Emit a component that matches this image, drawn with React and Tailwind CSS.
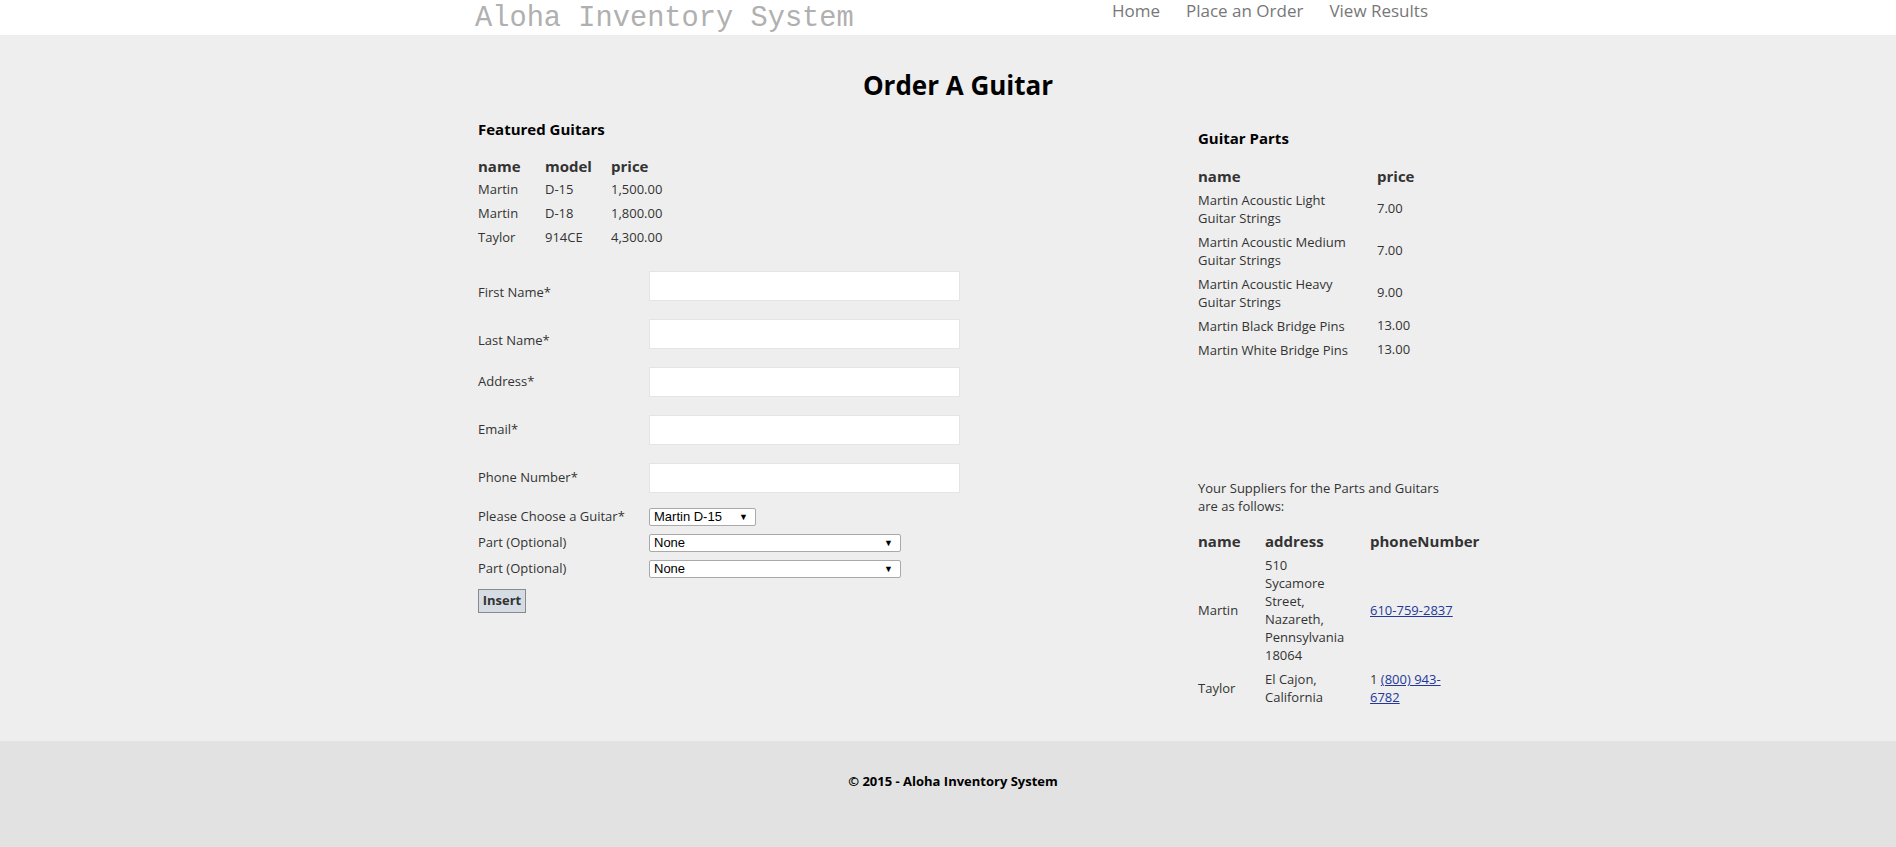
import { useState } from 'react'

const GUITARS = [
  { name: 'Martin', model: 'D-15', price: '1,500.00' },
  { name: 'Martin', model: 'D-18', price: '1,800.00' },
  { name: 'Taylor', model: '914CE', price: '4,300.00' }
]

const PARTS = [
  { name: ['Martin Acoustic Light', 'Guitar Strings'], price: '7.00' },
  { name: ['Martin Acoustic Medium', 'Guitar Strings'], price: '7.00' },
  { name: ['Martin Acoustic Heavy', 'Guitar Strings'], price: '9.00' },
  { name: ['Martin Black Bridge Pins'], price: '13.00' },
  { name: ['Martin White Bridge Pins'], price: '13.00' }
]

const FIELDS = [
  { label: 'First Name*', pad: 'pt-[14px]' },
  { label: 'Last Name*', pad: 'pt-[14px]' },
  { label: 'Address*', pad: 'pt-0' },
  { label: 'Email*', pad: 'pt-0' },
  { label: 'Phone Number*', pad: 'pt-0' }
]

function FakeSelect({ value, width }) {
  return (
    <div className={`flex h-[18px] items-center justify-between rounded-[2px] border border-[#a9a9a9] bg-white pl-[4px] pr-[7px] font-['Liberation_Sans',sans-serif] text-[13px] text-black ${width}`}>
      <span>{value}</span>
      <span className="text-[9px] leading-none">▼</span>
    </div>
  )
}

export default function App() {
  const [values, setValues] = useState({})

  return (
    <div className="h-[847px] overflow-hidden bg-[#eeeeee] font-['Open_Sans',sans-serif] text-[13px] text-[#333]">
      <header className="h-[35px] bg-white">
        <div className="ml-[475px] flex w-[953px] items-start justify-between">
          <div className="mt-[2px] font-['Liberation_Mono',monospace] text-[28.7px] leading-[33px] text-[#b0b0b0]">
            Aloha Inventory System
          </div>
          <nav className="flex gap-[26px] text-[17px] leading-[22px] text-[#777]">
            <a>Home</a>
            <a>Place an Order</a>
            <a>View Results</a>
          </nav>
        </div>
      </header>

      <main className="ml-[478px] h-[706px] w-[960px]">
        <h1 className="pt-[34px] text-center text-[26px] font-bold leading-[32px] text-black">Order A Guitar</h1>

        <div className="mt-[15px] flex">
          <div className="w-[720px]">
            <h2 className="mt-[3px] text-[15px] font-bold leading-[20px] text-black">Featured Guitars</h2>
            <table className="mt-[15px] border-collapse">
              <thead>
                <tr className="h-[24px] text-left text-[15px] font-bold">
                  <th className="w-[67px] p-0">name</th>
                  <th className="w-[66px] p-0">model</th>
                  <th className="p-0">price</th>
                </tr>
              </thead>
              <tbody>
                {GUITARS.map((g) => (
                  <tr key={g.model} className="h-[24px]">
                    <td className="p-0">{g.name}</td>
                    <td className="p-0">{g.model}</td>
                    <td className="p-0">{g.price}</td>
                  </tr>
                ))}
              </tbody>
            </table>

            <form className="mt-[21px]">
              {FIELDS.map((f) => (
                <div key={f.label} className="flex h-[48px] items-start">
                  <label className={`flex h-[30px] w-[171px] items-center ${f.pad}`}>{f.label}</label>
                  <input
                    value={values[f.label] || ''}
                    onChange={(e) => setValues({ ...values, [f.label]: e.target.value })}
                    className="h-[30px] w-[311px] border border-[#e4e4e4] bg-white px-2 outline-none"
                  />
                </div>
              ))}

              <div className="-mt-[7px] flex h-[26px] items-center">
                <label className="w-[171px]">Please Choose a Guitar*</label>
                <FakeSelect value="Martin D-15" width="w-[107px]" />
              </div>
              <div className="flex h-[26px] items-center">
                <label className="w-[171px]">Part (Optional)</label>
                <FakeSelect value="None" width="w-[252px]" />
              </div>
              <div className="flex h-[26px] items-center">
                <label className="w-[171px]">Part (Optional)</label>
                <FakeSelect value="None" width="w-[252px]" />
              </div>
              <button
                type="button"
                className="mt-[7px] h-[24px] w-[48px] border border-[#8a8a8a] bg-[#d5dce4] text-[13px] font-bold text-[#333]"
              >
                Insert
              </button>
            </form>
          </div>

          <div className="w-[240px]">
            <h2 className="mt-[12px] text-[15px] font-bold leading-[20px] text-black">Guitar Parts</h2>
            <table className="mt-[16px] border-collapse">
              <thead>
                <tr className="h-[24px] text-left text-[15px] font-bold">
                  <th className="w-[179px] p-0">name</th>
                  <th className="p-0">price</th>
                </tr>
              </thead>
              <tbody>
                {PARTS.map((p) => (
                  <tr key={p.name.join(' ')} className={p.name.length > 1 ? 'h-[42px]' : 'h-[24px]'}>
                    <td className="p-0 leading-[18px]">
                      {p.name.map((line) => (
                        <div key={line}>{line}</div>
                      ))}
                    </td>
                    <td className="p-0">{p.price}</td>
                  </tr>
                ))}
              </tbody>
            </table>

            <p className="mt-[117px] whitespace-nowrap leading-[18px]">
              Your Suppliers for the Parts and Guitars
              <br />
              are as follows:
            </p>

            <table className="mt-[14px] w-[290px] table-fixed border-collapse">
              <colgroup>
                <col className="w-[67px]" />
                <col className="w-[105px]" />
                <col className="w-[118px]" />
              </colgroup>
              <thead>
                <tr className="h-[24px] text-left text-[15px] font-bold">
                  <th className="p-0">name</th>
                  <th className="p-0">address</th>
                  <th className="p-0 whitespace-nowrap">phoneNumber</th>
                </tr>
              </thead>
              <tbody className="leading-[18px]">
                <tr>
                  <td className="p-0 py-[3px]">Martin</td>
                  <td className="p-0 py-[3px]">
                    510
                    <br />
                    Sycamore
                    <br />
                    Street,
                    <br />
                    Nazareth,
                    <br />
                    Pennsylvania
                    <br />
                    18064
                  </td>
                  <td className="p-0 py-[3px]">
                    <a className="text-[#23389a] underline">610-759-2837</a>
                  </td>
                </tr>
                <tr>
                  <td className="p-0 py-[3px]">Taylor</td>
                  <td className="p-0 py-[3px]">
                    El Cajon,
                    <br />
                    California
                  </td>
                  <td className="p-0 py-[3px]">
                    1 <a className="text-[#23389a] underline">(800) 943-</a>
                    <br />
                    <a className="text-[#23389a] underline">6782</a>
                  </td>
                </tr>
              </tbody>
            </table>
          </div>
        </div>
      </main>

      <footer className="h-[106px] bg-[#e2e2e2] pt-[31px] text-center text-[13px] font-bold leading-[18px] text-black">
        <span className="ml-[10px]">© 2015 - Aloha Inventory System</span>
      </footer>
    </div>
  )
}
